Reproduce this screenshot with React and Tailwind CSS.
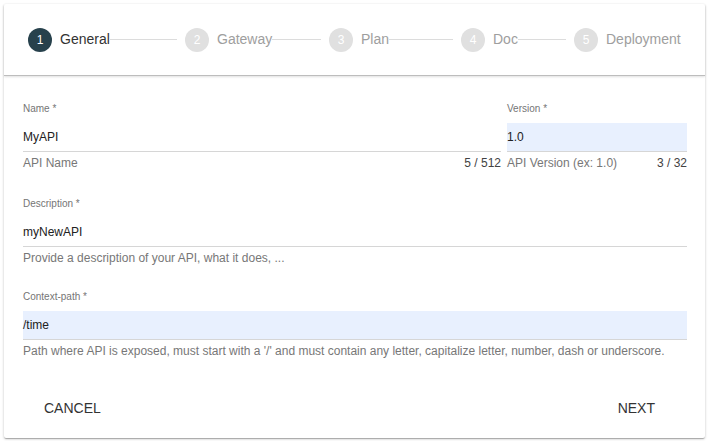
const steps = [
  { n: 1, label: 'General', w: 'w-[157px]', active: true },
  { n: 2, label: 'Gateway', w: 'w-[144px]' },
  { n: 3, label: 'Plan', w: 'w-[132px]' },
  { n: 4, label: 'Doc', w: 'w-[113px]' },
  { n: 5, label: 'Deployment', w: '' },
];

const Step = ({ n, label, w, active, last }) => (
  <div className={`flex items-center ${w}`}>
    <div
      className={`w-6 h-6 rounded-full flex items-center justify-center text-[12px] text-white shrink-0 ${
        active ? 'bg-[#27414c]' : 'bg-[#e0e0e0]'
      }`}
    >
      {n}
    </div>
    <span className={`ml-2 text-[14px] ${active ? 'text-[#333]' : 'text-[#9e9e9e]'}`}>{label}</span>
    {!last && <div className="flex-1 h-px bg-[#dcdcdc] mr-2" />}
  </div>
);

const Field = ({ label, value, hint, counter, filled, className = '' }) => (
  <div className={`flex flex-col ${className}`}>
    <label className="text-[10px] leading-[12px] text-[#757575]">{label}</label>
    <div
      className={`mt-2 h-[28px] flex items-center text-[12px] text-[#212121] border-b border-[#d6d6d6] box-content ${
        filled ? 'bg-[#e8f0fe] border-[#c8cfdb]' : ''
      }`}
    >
      {value}
    </div>
    <div className="mt-[3px] flex justify-between text-[12px] leading-4">
      <span className="text-[#777]">{hint}</span>
      {counter && <span className="text-[#424242]">{counter}</span>}
    </div>
  </div>
);

export default function App() {
  return (
    <div className="w-[709px] h-[441px] bg-white pt-1 pl-1 font-['Liberation_Sans',Arial,sans-serif]">
      <div className="w-[701px] h-[434px] bg-white flex flex-col rounded-[2px] shadow-[0_1px_3px_rgba(0,0,0,0.2),0_1px_1px_rgba(0,0,0,0.14),0_2px_1px_-1px_rgba(0,0,0,0.12)]">
        <div className="h-[72px] flex items-center pl-6 border-b border-[#bdbdbd] shadow-[0_1px_2px_rgba(0,0,0,0.12)]">
          {steps.map((s, i) => (
            <Step key={s.n} {...s} last={i === steps.length - 1} />
          ))}
        </div>

        <div className="flex flex-col pl-[19px] pr-[18px] pt-[27px]">
          <div className="flex gap-[6px]">
            <Field className="w-[478px]" label="Name *" value="MyAPI" hint="API Name" counter="5 / 512" />
            <Field className="flex-1" label="Version *" value="1.0" hint="API Version (ex: 1.0)" counter="3 / 32" filled />
          </div>
          <Field
            className="mt-[27px]"
            label="Description *"
            value="myNewAPI"
            hint="Provide a description of your API, what it does, ..."
          />
          <Field
            className="mt-[25px]"
            label="Context-path *"
            value="/time"
            hint="Path where API is exposed, must start with a '/' and must contain any letter, capitalize letter, number, dash or underscore."
            filled
          />
        </div>

        <div className="mt-auto flex justify-between pl-6 pr-[34px] pb-3">
          <button className="h-9 px-4 text-[14px] text-[#333] uppercase">Cancel</button>
          <button className="h-9 px-4 text-[14px] text-[#333] uppercase">Next</button>
        </div>
      </div>
    </div>
  );
}
